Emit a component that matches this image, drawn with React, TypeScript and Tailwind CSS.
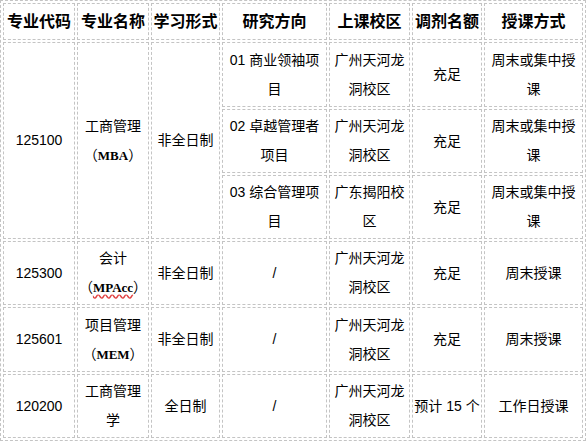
const cell =
  'border border-dashed border-[#c4c4c4] text-center align-middle p-0 text-[14px] leading-[29px] text-black'
const head =
  'border border-dashed border-[#c4c4c4] text-center align-middle p-0 text-[16px] font-bold leading-[20px] text-black h-[37px]'

function Abbr({ children }: { children: React.ReactNode }) {
  return <span className="font-bold text-[13px] font-['Liberation_Serif',serif]">{children}</span>
}

export default function App() {
  return (
    <div className="bg-white w-[588px] h-[444px] font-['Liberation_Sans','Noto_Sans_CJK_SC',sans-serif]">
      <table className="table-fixed w-[586px] border border-dashed border-[#c4c4c4] border-separate border-spacing-[2px]">
        <colgroup>
          <col className="w-[72px]" />
          <col className="w-[72px]" />
          <col className="w-[69px]" />
          <col className="w-[105px]" />
          <col className="w-[81px]" />
          <col className="w-[70px]" />
          <col className="w-[99px]" />
        </colgroup>
        <thead>
          <tr>
            <th className={head}>专业代码</th>
            <th className={head}>专业名称</th>
            <th className={head}>学习形式</th>
            <th className={head}>研究方向</th>
            <th className={head}>上课校区</th>
            <th className={head}>调剂名额</th>
            <th className={head}>授课方式</th>
          </tr>
        </thead>
        <tbody>
          <tr>
            <td rowSpan={3} className={cell}>125100</td>
            <td rowSpan={3} className={cell}>
              工商管理<br />（<Abbr>MBA</Abbr>）
            </td>
            <td rowSpan={3} className={cell}>非全日制</td>
            <td className={`${cell} h-[65px]`}>01 商业领袖项<br />目</td>
            <td className={cell}>广州天河龙<br />洞校区</td>
            <td className={cell}>充足</td>
            <td className={cell}>周末或集中授<br />课</td>
          </tr>
          <tr>
            <td className={`${cell} h-[64px]`}>02 卓越管理者<br />项目</td>
            <td className={cell}>广州天河龙<br />洞校区</td>
            <td className={cell}>充足</td>
            <td className={cell}>周末或集中授<br />课</td>
          </tr>
          <tr>
            <td className={`${cell} h-[64px]`}>03 综合管理项<br />目</td>
            <td className={cell}>广东揭阳校<br />区</td>
            <td className={cell}>充足</td>
            <td className={cell}>周末或集中授<br />课</td>
          </tr>
          <tr>
            <td className={`${cell} h-[64px]`}>125300</td>
            <td className={cell}>
              会计<br />（<span className="underline decoration-wavy decoration-[#e04040] underline-offset-2"><Abbr>MPAcc</Abbr></span>）
            </td>
            <td className={cell}>非全日制</td>
            <td className={cell}>/</td>
            <td className={cell}>广州天河龙<br />洞校区</td>
            <td className={cell}>充足</td>
            <td className={cell}>周末授课</td>
          </tr>
          <tr>
            <td className={`${cell} h-[65px]`}>125601</td>
            <td className={cell}>
              项目管理<br />（<Abbr>MEM</Abbr>）
            </td>
            <td className={cell}>非全日制</td>
            <td className={cell}>/</td>
            <td className={cell}>广州天河龙<br />洞校区</td>
            <td className={cell}>充足</td>
            <td className={cell}>周末授课</td>
          </tr>
          <tr>
            <td className={`${cell} h-[64px]`}>120200</td>
            <td className={cell}>工商管理<br />学</td>
            <td className={cell}>全日制</td>
            <td className={cell}>/</td>
            <td className={cell}>广州天河龙<br />洞校区</td>
            <td className={`${cell} whitespace-nowrap`}>预计 15 个</td>
            <td className={cell}>工作日授课</td>
          </tr>
        </tbody>
      </table>
    </div>
  )
}
